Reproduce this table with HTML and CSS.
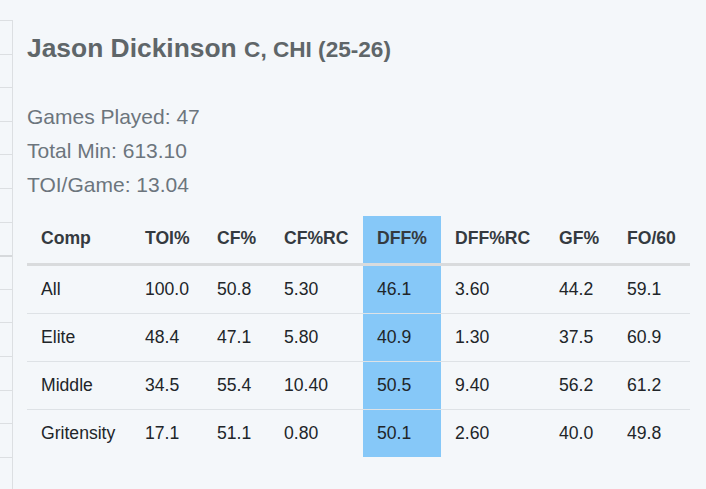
FILE: index.html
```html
<!DOCTYPE html>
<html>
<head>
<meta charset="utf-8">
<link rel="stylesheet" href="styles.css">
</head>
<body>
<div class="page">
  <aside class="side">
    <div class="side-row"></div><div class="side-row"></div><div class="side-row"></div>
    <div class="side-row"></div><div class="side-row"></div><div class="side-row"></div>
    <div class="side-row"></div><div class="side-row thick"></div><div class="side-row"></div>
    <div class="side-row"></div><div class="side-row"></div><div class="side-row"></div>
    <div class="side-row"></div><div class="side-row"></div>
  </aside>
  <main class="main">
    <h1 class="title">Jason Dickinson <span class="sub">C, CHI (25-26)</span></h1>
    <div class="stats">
      <p>Games Played: 47</p>
      <p>Total Min: 613.10</p>
      <p>TOI/Game: 13.04</p>
    </div>
    <table class="comp">
      <colgroup>
        <col class="c-comp"><col class="c-toi"><col class="c-cf"><col class="c-cfrc">
        <col class="c-dff"><col class="c-dffrc"><col class="c-gf"><col class="c-fo">
      </colgroup>
      <thead>
        <tr><th>Comp</th><th>TOI%</th><th>CF%</th><th>CF%RC</th><th class="hl">DFF%</th><th>DFF%RC</th><th>GF%</th><th>FO/60</th></tr>
      </thead>
      <tbody>
        <tr><td>All</td><td>100.0</td><td>50.8</td><td>5.30</td><td class="hl">46.1</td><td>3.60</td><td>44.2</td><td>59.1</td></tr>
        <tr><td>Elite</td><td>48.4</td><td>47.1</td><td>5.80</td><td class="hl">40.9</td><td>1.30</td><td>37.5</td><td>60.9</td></tr>
        <tr><td>Middle</td><td>34.5</td><td>55.4</td><td>10.40</td><td class="hl">50.5</td><td>9.40</td><td>56.2</td><td>61.2</td></tr>
        <tr><td>Gritensity</td><td>17.1</td><td>51.1</td><td>0.80</td><td class="hl">50.1</td><td>2.60</td><td>40.0</td><td>49.8</td></tr>
      </tbody>
    </table>
  </main>
</div>
</body>
</html>
```

FILE: styles.css
```css
html, body {
  margin: 0;
  padding: 0;
  background: #f4f7fa;
  font-family: "Liberation Sans", Arial, sans-serif;
}
.page {
  display: flex;
  align-items: flex-start;
  height: 489px;
  overflow: hidden;
}
.side {
  width: 12px;
  flex: 0 0 12px;
  margin-top: 20px;
  border-right: 1px solid #dcdfe2;
}
.side-row {
  height: 33.6px;
  box-sizing: border-box;
  border-top: 1px solid #dcdfe2;
}
.side-row.thick {
  border-top: 2px solid #d6d9dc;
}
.main {
  margin-left: 14px;
  padding-top: 33px;
}
.title {
  margin: 0;
  font-size: 26.4px;
  line-height: 1.2;
  font-weight: bold;
  color: #5f6669;
}
.sub {
  font-size: 22.6px;
}
.stats {
  margin-top: 40px;
  margin-bottom: 19px;
}
.stats p {
  margin: 0 0 10px;
  font-size: 21px;
  line-height: 24px;
  color: #6c757d;
}
.stats p:last-child {
  margin-bottom: 0;
}
.comp {
  border-collapse: collapse;
  table-layout: fixed;
  width: 663px;
  font-size: 17.6px;
  line-height: 27px;
  color: #212529;
}
.c-comp { width: 104px; }
.c-toi { width: 72px; }
.c-cf { width: 67px; }
.c-cfrc { width: 93px; }
.c-dff { width: 78px; }
.c-dffrc { width: 104px; }
.c-gf { width: 68px; }
.c-fo { width: 77px; }
.comp th {
  text-align: left;
  font-weight: bold;
  color: #343a40;
  padding: 9px 14px 11px;
  border-bottom: 3px solid #d9dbdd;
  white-space: nowrap;
}
.comp td {
  text-align: left;
  padding: 10px 14px;
  border-bottom: 1px solid #dee2e6;
  white-space: nowrap;
}
.comp tbody tr:last-child td {
  border-bottom: none;
}
.comp .hl {
  background: #86c8f8;
}
```
